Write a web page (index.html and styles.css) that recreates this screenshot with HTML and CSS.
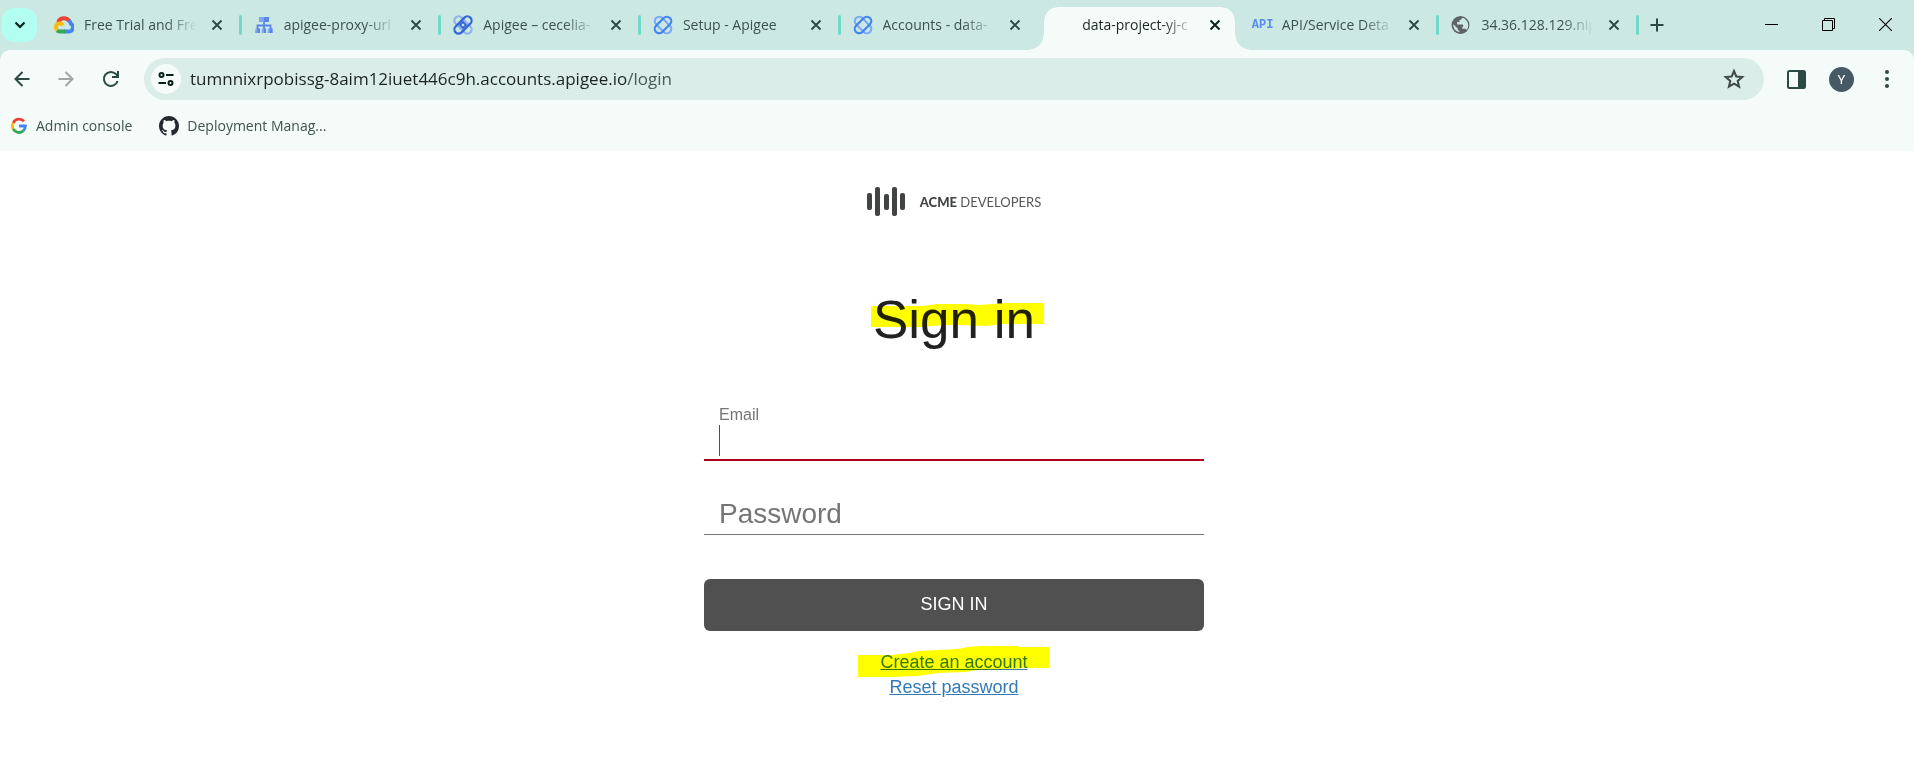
FILE: index.html
```html
<!DOCTYPE html>
<html lang="en">
<head>
<meta charset="utf-8">
<title>Sign in</title>
<link rel="stylesheet" href="styles.css">
</head>
<body>
<svg class="defs" aria-hidden="true">
  <symbol id="x" viewBox="0 0 12 12"><path d="M1.5 1.5l9 9M10.5 1.5l-9 9" fill="none" stroke="currentColor" stroke-width="1.900"/></symbol>
  <symbol id="apigee" viewBox="0 0 20 20">
    <g fill="none" stroke-width="2.200">
      <rect x="0.200" y="5.600" width="19.600" height="8.800" rx="4.400" transform="rotate(45 10 10)" stroke="#7baaf7"/>
      <rect x="0.200" y="5.600" width="19.600" height="8.800" rx="4.400" transform="rotate(-45 10 10)" stroke="#4285f4"/>
    </g>
  </symbol>
  <symbol id="apigee-bold" viewBox="0 0 20 20">
    <g fill="none" stroke-width="2.200">
      <rect x="-0.400" y="5.800" width="20.800" height="8.400" rx="4.200" transform="rotate(45 10 10)" stroke="#93b3ee"/>
      <rect x="-0.400" y="5.800" width="20.800" height="8.400" rx="4.200" transform="rotate(-45 10 10)" stroke="#3367d6"/>
      <path d="M10 7l3 3-3 3-3-3z" stroke="#3367d6" stroke-width="1.800"/>
    </g>
  </symbol>
</svg>

<header class="browser">
  <div class="strip">
    <button class="tab-search" aria-label="Search tabs"><svg width="12" height="8" viewBox="0 0 12 8"><path d="M1.5 1.5L6 6l4.500-4.500" fill="none" stroke="#0b1f1b" stroke-width="2.200"/></svg></button>
    <div class="tabs">
      <div class="tab">
        <svg class="fav" viewBox="0 0 20 20"><path d="M4.200 7.200A6.300 6.300 0 0 1 15.200 6" fill="none" stroke="#ea4335" stroke-width="4"/><path d="M15 5.500a6 6 0 0 1 1.800 3.200 4.200 4.200 0 0 1-1.300 7.800H10" fill="none" stroke="#4285f4" stroke-width="3.800"/><path d="M11 16.500H5.600a4 4 0 0 1-2.600-1" fill="none" stroke="#34a853" stroke-width="3.800"/><path d="M3.200 15.200A3.900 3.900 0 0 1 5.600 8.400c1.300 0 2.600.8 3.200 2" fill="none" stroke="#fbbc05" stroke-width="3.800"/></svg>
        <span class="title">Free Trial and Fre</span>
        <button class="close" aria-label="Close tab"><svg><use href="#x"/></svg></button>
      </div>
      <div class="tab">
        <svg class="fav" viewBox="0 0 20 20"><path d="M5 2h10v5H5zM1.500 13.500h4.500V18H1zM8 13.500h4V18H7.500zM14 13.500h4.500V18h-5z" fill="#7fa6f2"/><path d="M10 2h5v5h-5zM3.500 13.500h2.500V18H3.500zM10 13.500h2V18h-2zM16 13.500h2.500V18H16z" fill="#5a86e6"/><path d="M10 7v7M3.500 14v-3.500h13V14" fill="none" stroke="#5a86e6" stroke-width="1.800"/></svg>
        <span class="title">apigee-proxy-url</span>
        <button class="close" aria-label="Close tab"><svg><use href="#x"/></svg></button>
      </div>
      <div class="tab">
        <svg class="fav"><use href="#apigee-bold"/></svg>
        <span class="title">Apigee – cecelia-</span>
        <button class="close" aria-label="Close tab"><svg><use href="#x"/></svg></button>
      </div>
      <div class="tab">
        <svg class="fav"><use href="#apigee"/></svg>
        <span class="title title-short">Setup - Apigee</span>
        <button class="close" aria-label="Close tab"><svg><use href="#x"/></svg></button>
      </div>
      <div class="tab no-sep">
        <svg class="fav"><use href="#apigee"/></svg>
        <span class="title">Accounts - data-</span>
        <button class="close" aria-label="Close tab"><svg><use href="#x"/></svg></button>
      </div>
      <div class="tab active no-sep">
        <span class="fav"></span>
        <span class="title">data-project-yj-c</span>
        <button class="close" aria-label="Close tab"><svg><use href="#x"/></svg></button>
      </div>
      <div class="tab">
        <span class="fav api">API</span>
        <span class="title">API/Service Deta</span>
        <button class="close" aria-label="Close tab"><svg><use href="#x"/></svg></button>
      </div>
      <div class="tab">
        <svg class="fav" viewBox="0 0 20 20"><circle cx="9.500" cy="10" r="9" fill="#5f6368"/><path d="M11 2.800c-.2 1.700-1 2-2.500 2.100v2.200H6.100v2.400h5.200c1.300 0 1.300 2.400 0 2.400v1.800h2.400c.9 0 1.400.5 1.800 1.400A7.600 7.600 0 0 0 11 2.800zM2.200 9.200l4.600 4.400v1.200l1.600 1.100v1.200A7.300 7.300 0 0 1 2.200 9.200z" fill="#cce8e2"/></svg>
        <span class="title">34.36.128.129.nip</span>
        <button class="close" aria-label="Close tab"><svg><use href="#x"/></svg></button>
      </div>
    </div>
    <button class="new-tab" aria-label="New tab"><svg width="14" height="14" viewBox="0 0 14 14"><path d="M7 .5v13M.5 7h13" stroke="#2b4a43" stroke-width="2"/></svg></button>
    <div class="window-controls">
      <button aria-label="Minimize"><svg width="13" height="13" viewBox="0 0 13 13"><path d="M0 6.500h13" stroke="#000"/></svg></button>
      <button aria-label="Restore"><svg width="13" height="13" viewBox="0 0 13 13"><path d="M.5 2.500h10v10H.5zM2.500 2.500v-2h10v10h-2" fill="none" stroke="#000"/></svg></button>
      <button aria-label="Close"><svg width="13" height="13" viewBox="0 0 13 13"><path d="M0 0l13 13M13 0L0 13" stroke="#000" stroke-width="1.100"/></svg></button>
    </div>
  </div>

  <div class="panel">
    <div class="toolbar">
      <button class="nav" aria-label="Back"><svg width="16" height="16" viewBox="0 0 16 16"><path d="M15.500 8H2M8.500 1L1.500 8l7 7" fill="none" stroke="#2b4a43" stroke-width="2"/></svg></button>
      <button class="nav" aria-label="Forward"><svg width="16" height="16" viewBox="0 0 16 16"><path d="M.5 8H14M7.500 1l7 7-7 7" fill="none" stroke="#9fa8a6" stroke-width="2"/></svg></button>
      <button class="nav nav-reload" aria-label="Reload"><svg width="18" height="18" viewBox="0 0 18 18"><path d="M15.600 11A7 7 0 1 1 14 4.100L16 6.500M16 1v6h-6" fill="none" stroke="#2b4a43" stroke-width="2"/></svg></button>
      <div class="omnibox">
        <button class="site" aria-label="Site information"><svg width="16" height="14" viewBox="0 0 16 14"><g fill="none" stroke="#0b1f1b" stroke-width="2"><circle cx="3.500" cy="3" r="2"/><path d="M8 3h7.500M.5 11H8"/><circle cx="12.500" cy="11" r="2"/></g></svg></button>
        <div class="url">tumnnixrpobissg-8aim12iuet446c9h.accounts.apigee.io<span class="path">/login</span></div>
        <button class="star" aria-label="Bookmark this tab"><svg width="22" height="22" viewBox="0 0 22 22"><path d="M11 3l2.300 5.500 6 .5-4.600 3.900 1.400 5.800-5.100-3.100-5.100 3.100 1.400-5.800-4.600-3.900 6-.5z" fill="none" stroke="#3f4a48" stroke-width="2"/></svg></button>
      </div>
      <div class="actions">
        <button aria-label="Side panel"><svg width="19" height="19" viewBox="0 0 19 19"><rect x="1" y="1" width="17" height="17" rx="1.500" fill="none" stroke="#2b4a43" stroke-width="2"/><path d="M11 1h7v17h-7z" fill="#2b4a43"/></svg></button>
        <button aria-label="Profile"><span class="avatar">Y</span></button>
        <button aria-label="Menu"><svg width="4" height="18" viewBox="0 0 4 18"><g fill="#2b4a43"><circle cx="2" cy="2" r="2"/><circle cx="2" cy="9" r="2"/><circle cx="2" cy="16" r="2"/></g></svg></button>
      </div>
    </div>
    <nav class="bookmarks">
      <a href="#"><svg width="18" height="18" viewBox="0 0 18 18"><circle cx="9" cy="9" r="9" fill="#fff"/><g fill="none" stroke-width="2.800"><path d="M14 4.300A6.500 6.500 0 0 0 3.200 6" stroke="#ea4335"/><path d="M3.200 5.900a6.500 6.500 0 0 0 0 6.200" stroke="#fbbc05"/><path d="M3.200 12a6.500 6.500 0 0 0 10 1.900" stroke="#34a853"/><path d="M9 9h6.400c0 2.200-.8 3.800-2.200 5" stroke="#4285f4"/></g></svg>Admin console</a>
      <a href="#"><svg width="20" height="20" viewBox="0 0 16 16"><path fill="#24292f" d="M8 0C3.580 0 0 3.580 0 8c0 3.540 2.290 6.530 5.470 7.590.4.070.55-.17.55-.38 0-.19-.01-.82-.01-1.490-2.010.37-2.530-.49-2.690-.94-.09-.23-.48-.94-.82-1.130-.28-.15-.68-.52-.01-.53.63-.01 1.080.58 1.230.82.72 1.210 1.870.87 2.330.66.070-.52.28-.87.51-1.070-1.780-.2-3.640-.89-3.640-3.950 0-.87.31-1.590.82-2.150-.08-.2-.36-1.020.08-2.120 0 0 .67-.21 2.200.82.64-.18 1.320-.27 2-.27s1.360.09 2 .27c1.530-1.040 2.200-.82 2.200-.82.44 1.100.16 1.920.08 2.120.51.56.82 1.270.82 2.150 0 3.070-1.870 3.750-3.650 3.950.29.25.54.73.54 1.480 0 1.070-.01 1.930-.01 2.200 0 .21.15.46.55.38A8.010 8.010 0 0 0 16 8c0-4.420-3.580-8-8-8z"/></svg>Deployment Manag...</a>
    </nav>
  </div>
</header>

<main class="page">
  <div class="brand">
    <svg width="39" height="29" viewBox="0 0 39 29"><g fill="#424444"><rect x="0" y="6" width="5" height="17" rx="2"/><rect x="8" y="0" width="5" height="29" rx="2"/><rect x="17" y="7" width="5" height="16" rx="2"/><rect x="25" y="0" width="5" height="29" rx="2"/><rect x="33" y="6" width="5" height="17" rx="2"/></g></svg>
    <span class="brand-name"><b>ACME</b> DEVELOPERS</span>
  </div>
  <h1 class="heading">Sign in
    <svg class="mark mark-heading" width="173" height="24" viewBox="0 0 173 24"><path d="M0 3L52 3 66 1H96L108 2 135 0H173V21L130 21 116 23 90 22H72L52 24H0z" fill="#ff0"/></svg>
  </h1>
  <form class="form" onsubmit="return false">
    <div class="field">
      <label class="label" for="email">Email</label>
      <input class="input input-email" id="email" type="email">
      <span class="caret"></span>
    </div>
    <input class="input input-password" id="password" type="password" placeholder="Password" aria-label="Password">
    <button class="submit" type="submit">SIGN IN</button>
  </form>
  <div class="links">
    <a class="link" href="#">Create an account<svg class="mark mark-link" width="191" height="31" viewBox="0 0 191 31"><path d="M0 9L33 9 52 7 60 5 80 4 100 3 110 1 122 0H160L161 1H191V22H170L119 24 107 26 80 27 66 29 60 30 33 31H0z" fill="#ff0"/></svg></a>
    <a class="link" href="#">Reset password</a>
  </div>
</main>
</body>
</html>
```
FILE: styles.css
```css
* { box-sizing: border-box; }

body {
  margin: 0;
  background: #fff;
  font-family: "Liberation Sans", Arial, sans-serif;
}

button {
  display: flex;
  align-items: center;
  justify-content: center;
  padding: 0;
  border: 0;
  background: none;
  font: inherit;
}

svg { display: block; flex: none; }
.defs { position: absolute; width: 0; height: 0; }

.browser {
  background: #cce8e2;
  font-family: "Open Sans", "Noto Sans", sans-serif;
}

.strip {
  display: flex;
  height: 50px;
}

.tab-search {
  flex: none;
  width: 35px;
  height: 34px;
  margin: 8px 3px 0 2px;
  border-radius: 12px;
  background: #b2fff2;
}

.tabs {
  display: flex;
  flex: 0 1 1597px;
  min-width: 0;
}

.tab {
  position: relative;
  display: flex;
  flex: 1 1 0;
  align-items: center;
  min-width: 0;
  padding: 0 17px 0 14px;
  color: #3c524d;
}

.tab::after {
  content: "";
  position: absolute;
  top: 15px;
  right: -2px;
  width: 3px;
  height: 20px;
  border-radius: 2px;
  background: #70d9ca;
}

.tab.no-sep::after { display: none; }

.fav {
  flex: none;
  width: 20px;
  height: 20px;
  margin-right: 10px;
}

.api {
  color: #5b8def;
  font: bold 12px/20px "Liberation Mono", monospace;
}

.title {
  flex: 1;
  min-width: 0;
  white-space: nowrap;
  font-size: 14px;
  line-height: 20px;
  -webkit-mask-image: linear-gradient(to left, transparent, #000 32px);
  mask-image: linear-gradient(to left, transparent, #000 32px);
}

.title-short {
  -webkit-mask-image: none;
  mask-image: none;
}

.close {
  flex: none;
  width: 12px;
  height: 12px;
  margin-left: 14px;
  color: #2b4a43;
}

.close svg { width: 12px; height: 12px; }

.active { color: #1a2522; z-index: 0; }
.active .close { color: #0b1f1b; }

.active::before {
  content: "";
  position: absolute;
  z-index: -1;
  inset: 7px -12px 0 -9px;
  background:
    radial-gradient(circle at 0 0, transparent 14px, #f5fbf9 15px) left bottom / 15px 15px no-repeat,
    radial-gradient(circle at 100% 0, transparent 14px, #f5fbf9 15px) right bottom / 15px 15px no-repeat,
    radial-gradient(circle at 100% 100%, #f5fbf9 12px, transparent 13px) 15px 0 / 13px 13px no-repeat,
    radial-gradient(circle at 0 100%, #f5fbf9 12px, transparent 13px) calc(100% - 15px) 0 / 13px 13px no-repeat,
    linear-gradient(#f5fbf9, #f5fbf9) center top / calc(100% - 56px) 100% no-repeat,
    linear-gradient(#f5fbf9, #f5fbf9) center bottom / calc(100% - 30px) 30px no-repeat;
}

.new-tab { flex: none; width: 40px; }

.window-controls {
  display: flex;
  flex: none;
  margin-left: auto;
}

.window-controls button { width: 57px; height: 48px; }

.panel {
  border-radius: 10px 10px 0 0;
  background: #f5fbf9;
}

.toolbar {
  display: flex;
  align-items: center;
  padding: 8px 5px 0 0;
}

.nav { flex: none; width: 44px; height: 42px; }
.nav-reload { width: 46px; }

.omnibox {
  display: flex;
  flex: 1;
  align-items: center;
  height: 42px;
  min-width: 0;
  margin: 0 10px;
  padding: 0 19px 0 7px;
  border-radius: 21px;
  background: #daede8;
}

.site {
  flex: none;
  width: 30px;
  height: 30px;
  border-radius: 50%;
  background: #f5fbf9;
}

.url {
  flex: 1;
  min-width: 0;
  margin-left: 9px;
  overflow: hidden;
  white-space: nowrap;
  color: #1a2522;
  font-size: 17px;
  line-height: 24px;
}

.path { color: #4a5a57; }

.actions { display: flex; flex: none; }
.actions button { width: 45px; height: 42px; }

.avatar {
  width: 25px;
  height: 25px;
  border-radius: 50%;
  background: #455a64;
  color: #fff;
  font: 13px/25px Roboto, sans-serif;
}

.bookmarks {
  display: flex;
  gap: 27px;
  height: 51px;
  padding-left: 10px;
}

.bookmarks a {
  display: flex;
  align-items: center;
  gap: 8px;
  color: #3f524e;
  font-size: 14px;
  line-height: 20px;
  text-decoration: none;
}

.page {
  display: flex;
  flex-direction: column;
  align-items: center;
  padding: 36px 6px 40px 0;
}

.brand {
  display: flex;
  align-items: center;
  gap: 14px;
  margin-bottom: 74px;
}

.brand-name {
  color: #555;
  font: 13px/18px Lato, sans-serif;
}

.brand-name b { color: #424444; font-weight: 900; }

.heading {
  position: relative;
  margin: 0 0 55px;
  color: #212121;
  font-size: 53px;
  font-weight: 400;
  line-height: 60px;
}

.mark {
  position: absolute;
  mix-blend-mode: multiply;
  pointer-events: none;
}

.mark-heading { top: 13px; left: -2px; }
.mark-link { top: -4px; left: -22px; }

.form { width: 500px; max-width: 100%; }

.field { position: relative; }

.label {
  display: block;
  padding-left: 15px;
  color: #757575;
  font-size: 16px;
  line-height: 20px;
}

.input {
  display: block;
  width: 100%;
  padding: 0 15px;
  border: 0;
  border-radius: 0;
  outline: 0;
  background: none;
  color: #212121;
  font: 28px/32px "Liberation Sans", Arial, sans-serif;
}

.input-email {
  height: 36px;
  margin-bottom: 32px;
  border-bottom: 2px solid #b00020;
}

.input-password {
  height: 42px;
  margin-bottom: 44px;
  border-bottom: 1px solid #757575;
}

.input::placeholder { color: #757575; opacity: 1; }

.caret {
  position: absolute;
  top: 20px;
  left: 15px;
  width: 1px;
  height: 31px;
  background: #505050;
}

.submit {
  width: 100%;
  height: 52px;
  padding-bottom: 2px;
  border-radius: 6px;
  background: #505050;
  color: #fff;
  font-size: 18px;
}

.links {
  display: flex;
  flex-direction: column;
  align-items: center;
  margin-top: 19px;
}

.link {
  position: relative;
  color: #337ab7;
  font-size: 18px;
  line-height: 25px;
  text-decoration: underline;
}
```
